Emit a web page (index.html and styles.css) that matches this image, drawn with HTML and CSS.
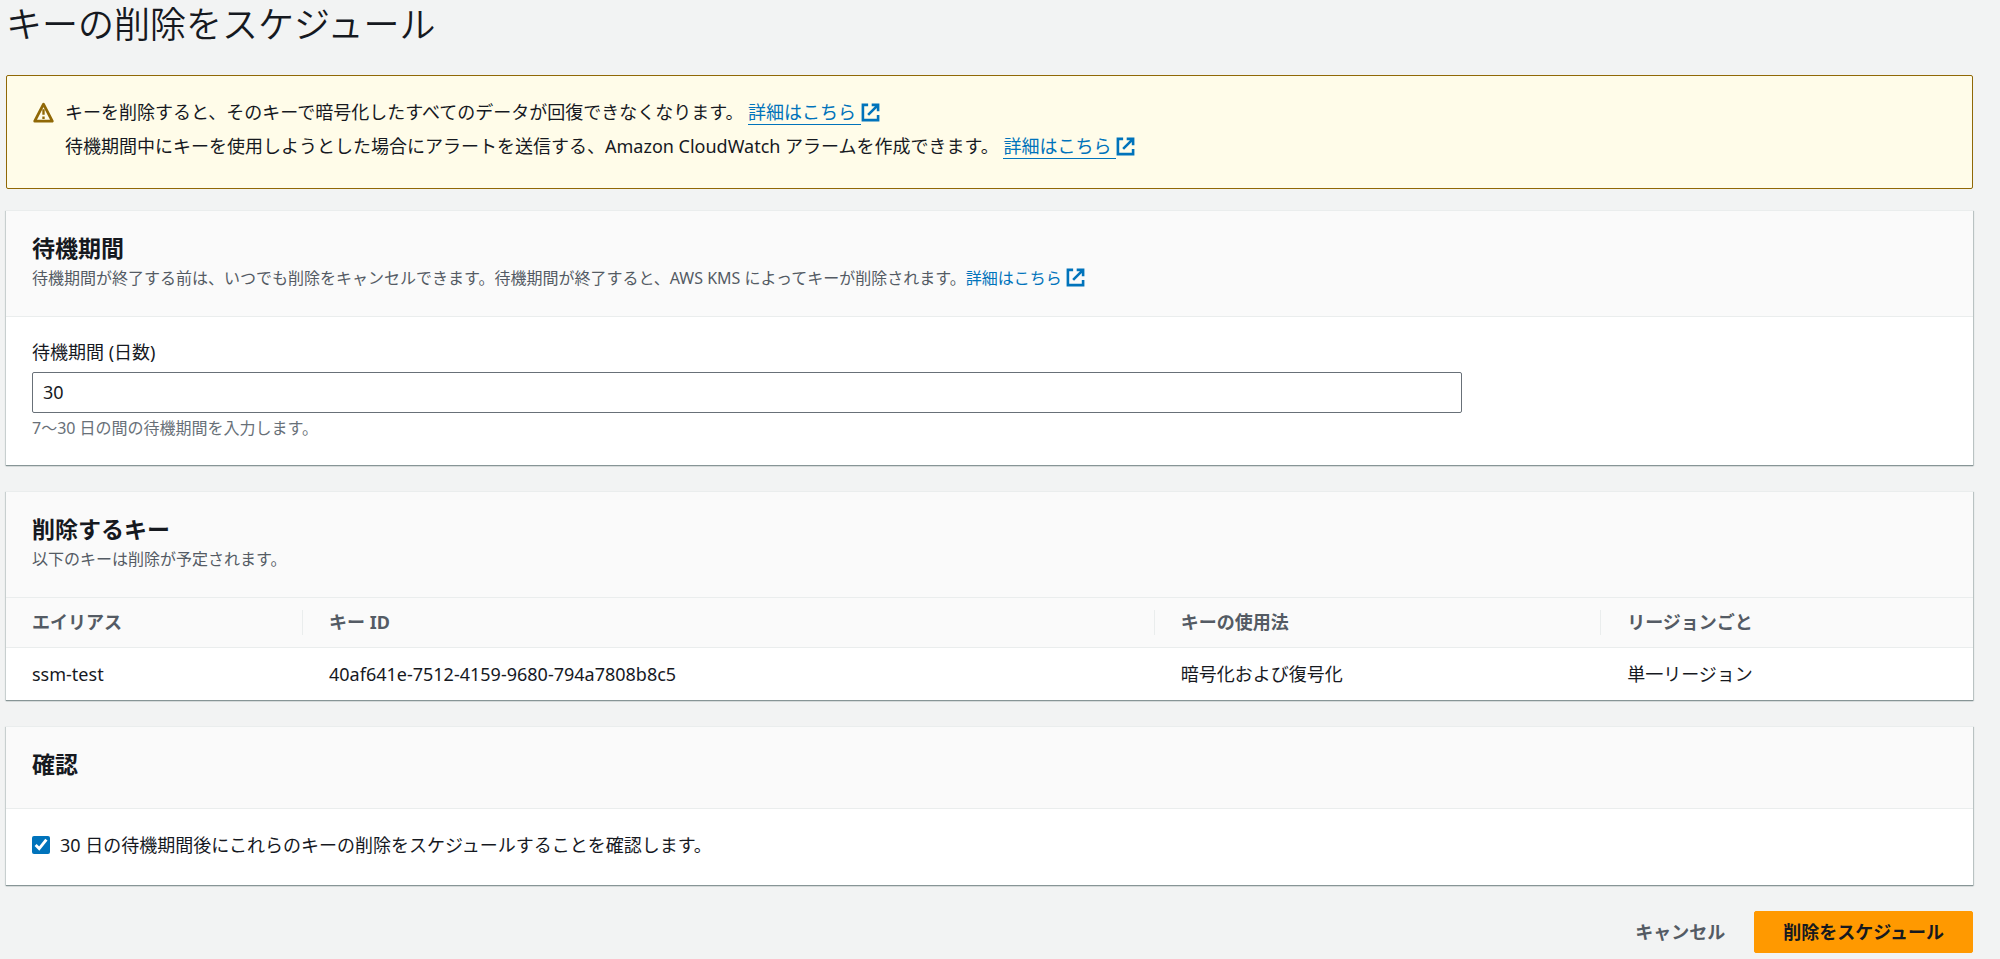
FILE: index.html
```html
<!DOCTYPE html>
<html lang="ja">
<head>
<meta charset="utf-8">
<title>キーの削除をスケジュール</title>
<link rel="stylesheet" href="styles.css">
</head>
<body>
<svg class="sprite" aria-hidden="true">
  <symbol id="external" viewBox="0 0 16 16">
    <path d="M6 1.6H1.6v12.8h12.8V10M9 1.6h5.4V7M14.2 1.8L6 10" fill="none" stroke="currentColor" stroke-width="2.2"/>
  </symbol>
</svg>
<main class="page">
  <h1 class="page-title">キーの削除をスケジュール</h1>

  <div class="alert" role="alert">
    <svg class="alert-icon" viewBox="0 0 16 16" aria-hidden="true">
      <path d="M8 1.6L14.7 14.6H1.3z" fill="none" stroke="currentColor" stroke-width="2.1" stroke-linejoin="round"/>
      <path d="M8 5.6v4.2M8 11v2" fill="none" stroke="currentColor" stroke-width="1.8"/>
    </svg>
    <div class="alert-text">
      <p>キーを削除すると、そのキーで暗号化したすべてのデータが回復できなくなります。 <a class="link" href="#"><span class="link-text">詳細はこちら&nbsp;</span><svg class="external"><use href="#external"/></svg></a></p>
      <p>待機期間中にキーを使用しようとした場合にアラートを送信する、Amazon CloudWatch アラームを作成できます。 <a class="link" href="#"><span class="link-text">詳細はこちら&nbsp;</span><svg class="external"><use href="#external"/></svg></a></p>
    </div>
  </div>

  <form class="form">
    <section class="panel">
      <header class="panel-header">
        <h2>待機期間</h2>
        <p>待機期間が終了する前は、いつでも削除をキャンセルできます。待機期間が終了すると、AWS KMS によってキーが削除されます。<a class="link" href="#">詳細はこちら <svg class="external"><use href="#external"/></svg></a></p>
      </header>
      <div class="field-grid">
        <div class="field">
          <label for="days">待機期間 (日数)</label>
          <input class="text-input" id="days" type="text" inputmode="numeric" value="30" aria-describedby="days-hint">
          <p class="hint" id="days-hint">7～30 日の間の待機期間を入力します。</p>
        </div>
      </div>
    </section>

    <section class="panel">
      <header class="panel-header">
        <h2>削除するキー</h2>
        <p>以下のキーは削除が予定されます。</p>
      </header>
      <table class="keys">
        <colgroup><col class="col-alias"><col class="col-id"><col class="col-usage"><col class="col-region"></colgroup>
        <thead>
          <tr><th scope="col"><div>エイリアス</div></th><th scope="col"><div>キー ID</div></th><th scope="col"><div>キーの使用法</div></th><th scope="col"><div>リージョンごと</div></th></tr>
        </thead>
        <tbody>
          <tr><td>ssm-test</td><td>40af641e-7512-4159-9680-794a7808b8c5</td><td>暗号化および復号化</td><td>単一リージョン</td></tr>
        </tbody>
      </table>
    </section>

    <section class="panel">
      <header class="panel-header">
        <h2>確認</h2>
      </header>
      <div class="confirm">
        <input class="checkbox" id="confirm" type="checkbox" checked>
        <label for="confirm">30 日の待機期間後にこれらのキーの削除をスケジュールすることを確認します。</label>
      </div>
    </section>

    <div class="actions">
      <button class="button" type="button">キャンセル</button>
      <button class="button button-primary" type="submit">削除をスケジュール</button>
    </div>
  </form>
</main>
</body>
</html>
```
FILE: styles.css
```css
* {
  box-sizing: border-box;
}

body {
  margin: 0;
  background: #f2f3f3;
  color: #16191f;
  font: 18px/28px "Noto Sans", "Noto Sans CJK JP", sans-serif;
}

h1, h2, p {
  margin: 0;
}

.sprite {
  display: none;
}

.page {
  padding: 0 27px 6px 6px;
}

.page-title {
  margin-bottom: 25px;
  font-size: 36px;
  line-height: 50px;
  font-weight: 350;
}

.alert {
  display: flex;
  gap: 11px;
  padding: 19px 26px 25px;
  border: 1px solid #906806;
  border-radius: 2px;
  background: #fffce9;
  line-height: 34px;
}

.alert-icon {
  width: 21px;
  height: 21px;
  margin-top: 7px;
  color: #906806;
}

.link {
  color: #0073bb;
  text-decoration: none;
}

.link-text {
  border-bottom: 1px solid #0073bb;
}

.external {
  width: 19px;
  height: 19px;
  vertical-align: -3px;
}

.form {
  display: flex;
  flex-direction: column;
  gap: 26px;
  padding-top: 21px;
}

.panel {
  background: #fff;
  border-top: 1px solid #eaeded;
  box-shadow: 0 1px 1px 0 #879596, 1px 1px 1px 0 #c5cccc, -1px 1px 1px 0 #d5dbdb;
}

.panel-header {
  padding: 20px 26px 27px;
  background: #fafafa;
  border-bottom: 1px solid #eaeded;
}

.panel-header h2 {
  font-size: 23px;
  line-height: 34px;
  font-weight: 700;
}

.panel-header p {
  margin-top: 3px;
  color: #545b64;
  font-size: 16px;
  line-height: 21px;
}

.field-grid {
  display: grid;
  grid-template-columns: 3fr 1fr;
  gap: 8px;
  padding: 21px 26px 25px;
}

.field {
  display: flex;
  flex-direction: column;
}

.text-input {
  width: 100%;
  margin: 6px 0 3px;
  padding: 5px 10px;
  border: 1px solid #687078;
  border-radius: 2px;
  background: #fff;
  color: #16191f;
  font: inherit;
  line-height: 29px;
}

.hint {
  color: #687078;
  font-size: 16px;
  line-height: 24px;
}

.keys {
  width: 100%;
  border-collapse: collapse;
  table-layout: fixed;
  text-align: left;
}

.col-alias {
  width: 15.1%;
}

.col-id {
  width: 43.3%;
}

.col-usage {
  width: 22.7%;
}

.col-region {
  width: 18.9%;
}

.keys th {
  padding: 12px 0;
  background: #fafafa;
  border-bottom: 1px solid #eaeded;
  color: #545b64;
  font-weight: 700;
  line-height: 25px;
}

.keys th div {
  padding: 0 26px;
  border-right: 1px solid #eaeded;
}

.keys th:last-child div {
  border-right: 0;
}

.keys td {
  padding: 12px 26px;
}

.confirm {
  display: flex;
  align-items: center;
  gap: 10px;
  padding: 22px 26px 26px;
}

.checkbox {
  width: 18px;
  height: 18px;
  margin: 0;
  accent-color: #0073bb;
}

.actions {
  display: flex;
  justify-content: flex-end;
}

.button {
  padding: 6px 28px;
  border: 1px solid transparent;
  border-radius: 2px;
  background: transparent;
  color: #545b64;
  font: inherit;
  font-weight: 700;
}

.button-primary {
  background: #ff9900;
  border-color: #ff9900;
  color: #16191f;
}
```
